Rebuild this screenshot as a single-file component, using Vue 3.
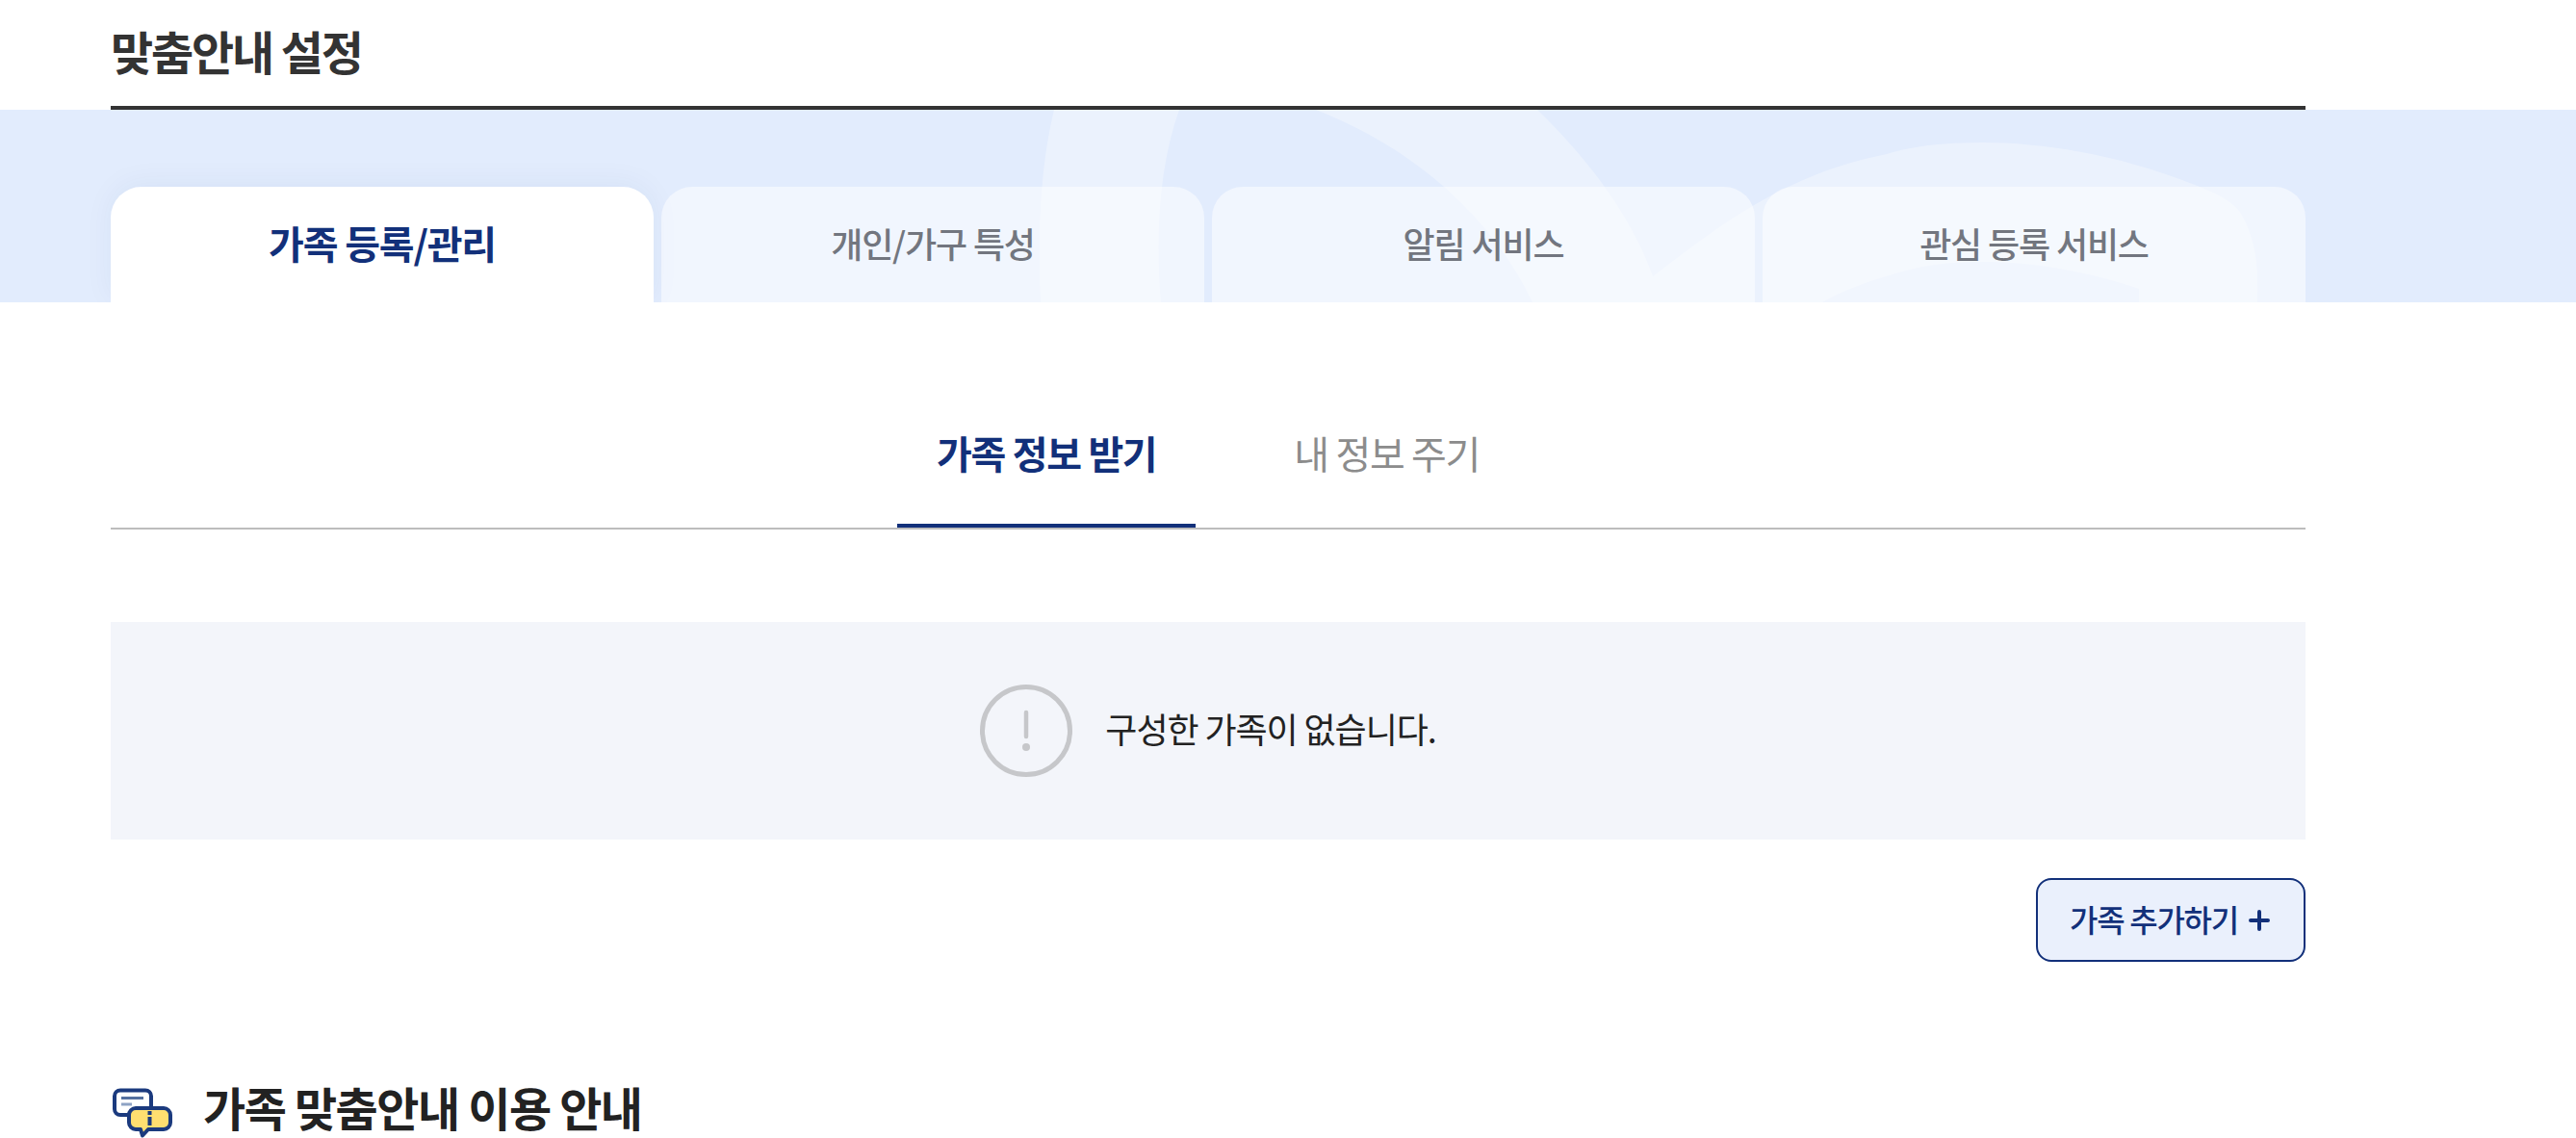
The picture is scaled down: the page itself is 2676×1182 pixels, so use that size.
<script setup>
import { ref } from "vue";

document.title = "맞춤안내 설정";

const mainTabs = ["가족 등록/관리", "개인/가구 특성", "알림 서비스", "관심 등록 서비스"];
const subTabs = ["가족 정보 받기", "내 정보 주기"];
const activeMain = ref(0);
const activeSub = ref(0);
</script>

<template>
  <div class="page">
    <header class="wrap page-head">
      <h1>맞춤안내 설정</h1>
    </header>

    <section class="band">
      <svg class="band-bg" viewBox="0 114 2676 200" width="2676" height="200" aria-hidden="true">
        <path d="M1095 114C1084 160 1077 220 1081 314L1206 314C1200 240 1205 170 1225 114Z" />
        <path
          fill-rule="evenodd"
          d="M1367 114C1420 135 1465 163 1500 194C1540 230 1570 268 1592 314L2345 314C2346 280 2345 250 2327 220C2315 205 2295 198 2280 192C2200 160 2120 148 2060 148C2020 148 1985 152 1960 160C1930 166 1900 175 1873 187C1815 212 1765 250 1717 287C1695 225 1650 165 1597 114ZM1893 314C1915 302 1940 292 1973 283C2000 275 2030 272 2060 272C2110 272 2170 282 2222 300L2222 314Z"
        />
      </svg>
      <nav class="wrap main-tabs">
        <a
          v-for="(tab, i) in mainTabs"
          :key="tab"
          class="main-tab"
          :class="{ active: i === activeMain }"
          @click="activeMain = i"
        >{{ tab }}</a>
      </nav>
    </section>

    <main class="wrap">
      <nav class="sub-tabs">
        <a
          v-for="(tab, i) in subTabs"
          :key="tab"
          class="sub-tab"
          :class="{ active: i === activeSub }"
          @click="activeSub = i"
        >{{ tab }}</a>
      </nav>

      <div class="empty-box">
        <svg class="empty-icon" viewBox="0 0 96 96" width="96" height="96" aria-hidden="true">
          <circle cx="48" cy="48" r="45.5" fill="none" stroke="#c6c7ca" stroke-width="5" />
          <line x1="48" y1="29" x2="48" y2="54" stroke="#c6c7ca" stroke-width="4.5" stroke-linecap="round" />
          <circle cx="48" cy="65" r="4" fill="#c6c7ca" />
        </svg>
        <p>구성한 가족이 없습니다.</p>
      </div>

      <div class="actions">
        <button class="add-btn" type="button">
          가족 추가하기
          <svg viewBox="0 0 22 22" width="22" height="22" aria-hidden="true">
            <path d="M11 2V20M2 11H20" stroke="#12307a" stroke-width="4" stroke-linecap="round" />
          </svg>
        </button>
      </div>

      <section class="guide">
        <svg viewBox="0 0 62 52" width="62" height="52" aria-hidden="true">
          <path
            d="M8 2.500H34A6 6 0 0 1 40 8.500V22A6 6 0 0 1 34 28H8A6 6 0 0 1 2 22V8.500A6 6 0 0 1 8 2.500Z"
            fill="#fff"
            stroke="#1b3a7e"
            stroke-width="4"
          />
          <path d="M9 10.500H32" stroke="#54709f" stroke-width="3" />
          <path d="M9 17H20" stroke="#8ea3c4" stroke-width="3" />
          <path
            d="M24 21H53A7 7 0 0 1 60 28V36A7 7 0 0 1 53 43H37L31 49.500L29 43H24A7 7 0 0 1 17 36V28A7 7 0 0 1 24 21Z"
            fill="#ffdf70"
            stroke="#1b3a7e"
            stroke-width="4"
            stroke-linejoin="round"
          />
          <rect x="36.500" y="24" width="4" height="4" fill="#1b3a7e" />
          <rect x="36.500" y="30" width="4" height="9" fill="#1b3a7e" />
        </svg>
        <h2>가족 맞춤안내 이용 안내</h2>
      </section>
    </main>
  </div>
</template>

<style scoped>
.page {
  font-family: "Noto Sans CJK KR", "Noto Sans", sans-serif;
  color: #222;
}

.wrap {
  width: 2280px;
  margin-left: 115px;
}

.page-head {
  height: 104px;
  padding-bottom: 6px;
  border-bottom: 4px solid #333;
  display: flex;
  align-items: center;
}

h1 {
  margin: 0;
  font-size: 48px;
  line-height: 60px;
  font-weight: 700;
  letter-spacing: -0.045em;
  color: #333;
}

.band {
  position: relative;
  height: 200px;
  background: #e2ecfd;
  overflow: hidden;
  display: flex;
  align-items: flex-end;
}

.band-bg {
  position: absolute;
  top: 0;
  left: 0;
}

.band-bg path {
  fill: #fff;
  fill-opacity: 0.32;
}

.main-tabs {
  position: relative;
  display: flex;
  gap: 8px;
}

.main-tab {
  flex: 1;
  height: 120px;
  padding-bottom: 4px;
  box-sizing: border-box;
  display: flex;
  align-items: center;
  justify-content: center;
  border-radius: 32px 32px 0 0;
  background: rgba(255, 255, 255, 0.5);
  font-size: 36px;
  font-weight: 500;
  letter-spacing: -0.032em;
  color: #72767f;
  cursor: pointer;
}

.main-tab.active {
  background: #fff;
  font-size: 40px;
  font-weight: 700;
  letter-spacing: -0.03em;
  color: #12307a;
  box-shadow: 0 -4px 30px rgba(20, 50, 120, 0.05);
}

.sub-tabs {
  margin-top: 126px;
  display: flex;
  justify-content: center;
  gap: 61px;
  border-bottom: 2px solid #bdbdbd;
}

.sub-tab {
  padding: 0 41px 44px;
  border-bottom: 4px solid transparent;
  font-size: 40px;
  line-height: 60px;
  letter-spacing: -0.033em;
  color: #8c8c8c;
  cursor: pointer;
}

.sub-tab.active {
  font-weight: 700;
  color: #12307a;
  border-bottom-color: #12307a;
}

.empty-box {
  margin-top: 96px;
  height: 226px;
  background: #f3f5fa;
  display: flex;
  align-items: center;
  justify-content: center;
  gap: 34px;
}

.empty-box p {
  margin: 0;
  padding-bottom: 6px;
  font-size: 36px;
  line-height: 50px;
  letter-spacing: -0.03em;
  color: #222;
}

.actions {
  margin-top: 40px;
  display: flex;
  justify-content: flex-end;
}

.add-btn {
  width: 280px;
  height: 87px;
  padding: 0 2px 3px 0;
  border: 2px solid #12307a;
  border-radius: 16px;
  background: #eaf0fc;
  display: flex;
  align-items: center;
  justify-content: center;
  gap: 11px;
  font-family: inherit;
  font-size: 32px;
  font-weight: 500;
  letter-spacing: -0.04em;
  color: #12307a;
  cursor: pointer;
}

.add-btn svg {
  margin-top: 3px;
}

.guide {
  margin-top: 120px;
  margin-left: 2px;
  display: flex;
  align-items: flex-start;
  gap: 32px;
}

.guide svg {
  margin-top: 11px;
}

.guide h2 {
  margin: 0;
  font-size: 48px;
  line-height: 60px;
  font-weight: 700;
  letter-spacing: -0.03em;
  color: #222;
}
</style>

<style>
html,
body {
  background: #fff;
  overflow: hidden;
}
</style>
